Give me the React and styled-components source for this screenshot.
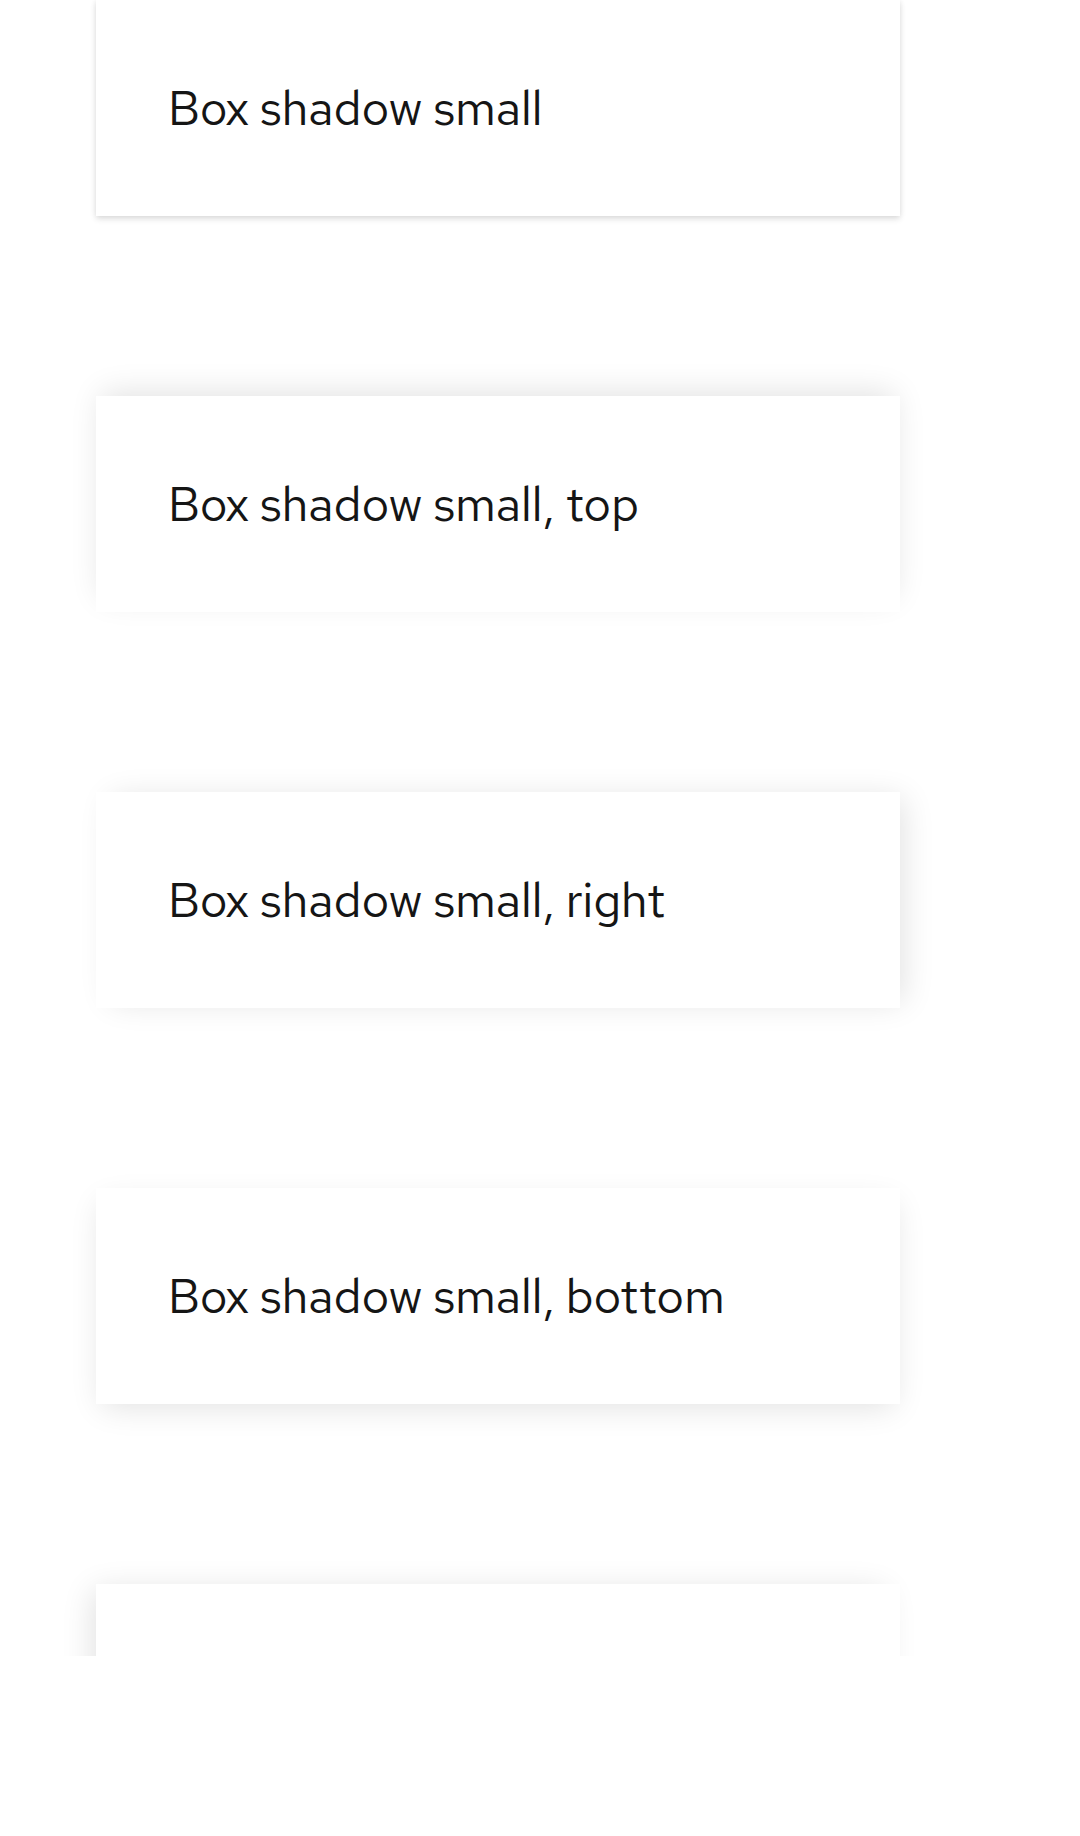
import React from "react";
import styled, { createGlobalStyle } from "styled-components";

const GlobalStyle = createGlobalStyle`
  html, body {
    margin: 0;
    padding: 0;
    background: #ffffff;
  }
  body {
    font-family: "Red Hat Text", Lato, "Open Sans", sans-serif;
    color: #151515;
  }
`;

const shadows = {
  sm: "0 3px 6px 0 rgba(3, 3, 3, 0.12), 0 0 6px 0 rgba(3, 3, 3, 0.06)",
  top: "0 -9px 30px -6px rgba(3, 3, 3, 0.12)",
  right: "9px 0 30px -6px rgba(3, 3, 3, 0.12)",
  bottom: "0 9px 30px -6px rgba(3, 3, 3, 0.12)",
  left: "-9px 0 30px -6px rgba(3, 3, 3, 0.12)",
};

const Viewport = styled.div`
  height: 1656px;
  overflow: hidden;
`;

const CardList = styled.div`
  display: flex;
  flex-direction: column;
  gap: 180px;
  padding: 0 180px 0 96px;
`;

const Card = styled.div`
  background: #ffffff;
  padding: 72px;
  min-height: 72px;
  font-size: 48px;
  line-height: 72px;
  box-shadow: ${({ $shadow }) => shadows[$shadow]};
`;

// last card runs past the bottom of the viewport, its label is out of view
const items = [
  { shadow: "sm", label: "Box shadow small" },
  { shadow: "top", label: "Box shadow small, top" },
  { shadow: "right", label: "Box shadow small, right" },
  { shadow: "bottom", label: "Box shadow small, bottom" },
  { shadow: "left", label: "" },
];

export default function App() {
  return (
    <>
      <GlobalStyle />
      <Viewport>
        <CardList>
          {items.map((item) => (
            <Card key={item.shadow} $shadow={item.shadow}>
              {item.label}
            </Card>
          ))}
        </CardList>
      </Viewport>
    </>
  );
}
